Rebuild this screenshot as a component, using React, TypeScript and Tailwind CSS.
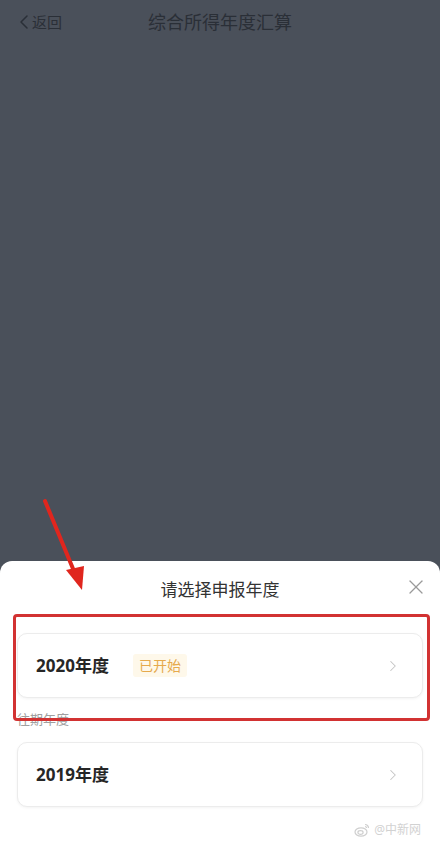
import { ChevronLeft, ChevronRight, X } from "lucide-react";

const font = { fontFamily: '"Noto Sans", "Noto Sans CJK SC", sans-serif' };

function YearCard({ year, badge }: { year: string; badge?: string }) {
  return (
    <div className="flex h-[65px] items-center rounded-[10px] border border-[#ececec] bg-white pl-[18px] pr-[20px] shadow-[0_1px_3px_rgba(0,0,0,0.05)]">
      <div className="text-[17px] font-bold text-[#262626]">{year}</div>
      {badge ? (
        <div className="ml-[24px] rounded-[3px] bg-[#fef8ea] px-[6px] py-[1px] text-[14px] text-[#e6a94c]">
          {badge}
        </div>
      ) : null}
      <ChevronRight className="ml-auto h-[18px] w-[18px] text-[#c4c4c4]" strokeWidth={1.4} />
    </div>
  );
}

export default function App() {
  return (
    <div className="relative flex h-[844px] w-[440px] flex-col overflow-hidden bg-[#4a505a]" style={font}>
      <div className="relative flex h-[44px] flex-none items-center justify-center">
        <div className="absolute left-[12px] top-[10px] flex items-center text-[#2a2f37]">
          <ChevronLeft className="h-[24px] w-[24px]" strokeWidth={1.5} />
          <span className="-ml-[4px] text-[15px]">返回</span>
        </div>
        <div className="text-[18px] text-[#2a2f37]">综合所得年度汇算</div>
      </div>

      <div className="flex-1" />

      <div className="flex-none rounded-t-[12px] bg-white px-[17px]">
        <div className="relative flex h-[53px] items-center justify-center pt-[4px]">
          <div className="text-[17px] text-[#333333]">请选择申报年度</div>
          <X className="absolute right-[-5px] top-[14px] h-[24px] w-[24px] text-[#9a9a9a]" strokeWidth={1.3} />
        </div>

        <div className="relative pt-[19px]">
          <YearCard year="2020年度" badge="已开始" />
          <div className="mt-[12px] text-[13px] leading-[18px] text-[#a0a0a0]">往期年度</div>
          <div className="pointer-events-none absolute left-[-4px] right-[-7px] top-[0px] h-[107px] rounded-[4px] border-[3.5px] border-[#d23232]" />
        </div>

        <div className="mt-[14px]">
          <YearCard year="2019年度" />
        </div>

        <div className="flex h-[37px] items-center justify-end gap-[4px] pr-[2px] pt-[8px]">
          <svg width="16" height="14" viewBox="0 0 16 14" fill="none" stroke="#cfcfcf" strokeWidth="1.2">
            <ellipse cx="7" cy="9" rx="6" ry="4.2" />
            <ellipse cx="6.5" cy="9.5" rx="2.6" ry="1.8" />
            <path d="M11 1.5a3.5 3.5 0 0 1 3.5 3.5" />
            <path d="M11 3.5a1.5 1.5 0 0 1 1.5 1.5" />
          </svg>
          <span className="text-[12px] text-[#d2d2d2]">@中新网</span>
        </div>
      </div>

      <svg className="pointer-events-none absolute left-[38px] top-[496px]" width="56" height="100" viewBox="0 0 56 100">
        <path d="M7 5 L38 80" stroke="#e0261e" strokeWidth="4" strokeLinecap="round" />
        <path d="M44 94 L28 74 L46 70 Z" fill="#e0261e" />
      </svg>
    </div>
  );
}
